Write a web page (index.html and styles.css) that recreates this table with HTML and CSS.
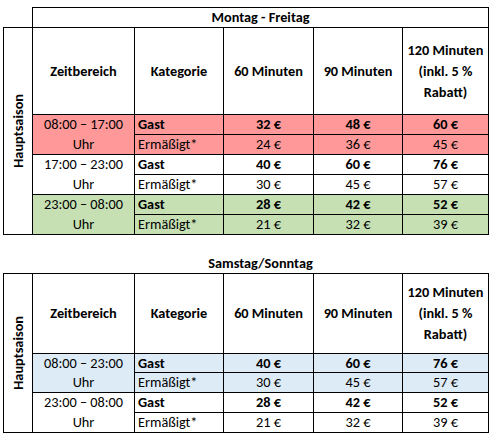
FILE: index.html
```html
<!DOCTYPE html>
<html lang="de">
<head>
<meta charset="utf-8">
<title>Preise</title>
<link rel="stylesheet" href="styles.css">
</head>
<body>
<div class="sheet">
  <div class="block">
    <div class="caption boxed">Montag - Freitag</div>
    <div class="grid grid1" role="table">
      <div class="cell season"><span>Hauptsaison</span></div>
      <div class="cell head">Zeitbereich</div>
      <div class="cell head">Kategorie</div>
      <div class="cell head">60 Minuten</div>
      <div class="cell head">90 Minuten</div>
      <div class="cell head">120 Minuten (inkl. 5 % Rabatt)</div>

      <div class="cell time red">08:00 – 17:00<br>Uhr</div>
      <div class="cell cat b red">Gast</div>
      <div class="cell b red">32 €</div>
      <div class="cell b red">48 €</div>
      <div class="cell b red">60 €</div>
      <div class="cell cat red">Ermäßigt*</div>
      <div class="cell red">24 €</div>
      <div class="cell red">36 €</div>
      <div class="cell red">45 €</div>

      <div class="cell time">17:00 – 23:00<br>Uhr</div>
      <div class="cell cat b">Gast</div>
      <div class="cell b">40 €</div>
      <div class="cell b">60 €</div>
      <div class="cell b">76 €</div>
      <div class="cell cat">Ermäßigt*</div>
      <div class="cell">30 €</div>
      <div class="cell">45 €</div>
      <div class="cell">57 €</div>

      <div class="cell time green">23:00 – 08:00<br>Uhr</div>
      <div class="cell cat b green">Gast</div>
      <div class="cell b green">28 €</div>
      <div class="cell b green">42 €</div>
      <div class="cell b green">52 €</div>
      <div class="cell cat green">Ermäßigt*</div>
      <div class="cell green">21 €</div>
      <div class="cell green">32 €</div>
      <div class="cell green">39 €</div>
    </div>
  </div>

  <div class="block">
    <div class="caption">Samstag/Sonntag</div>
    <div class="grid grid2" role="table">
      <div class="cell season season2"><span>Hauptsaison</span></div>
      <div class="cell head">Zeitbereich</div>
      <div class="cell head">Kategorie</div>
      <div class="cell head">60 Minuten</div>
      <div class="cell head">90 Minuten</div>
      <div class="cell head">120 Minuten (inkl. 5 % Rabatt)</div>

      <div class="cell time blue">08:00 – 23:00<br>Uhr</div>
      <div class="cell cat b blue">Gast</div>
      <div class="cell b blue">40 €</div>
      <div class="cell b blue">60 €</div>
      <div class="cell b blue">76 €</div>
      <div class="cell cat blue">Ermäßigt*</div>
      <div class="cell blue">30 €</div>
      <div class="cell blue">45 €</div>
      <div class="cell blue">57 €</div>

      <div class="cell time">23:00 – 08:00<br>Uhr</div>
      <div class="cell cat b">Gast</div>
      <div class="cell b">28 €</div>
      <div class="cell b">42 €</div>
      <div class="cell b">52 €</div>
      <div class="cell cat">Ermäßigt*</div>
      <div class="cell">21 €</div>
      <div class="cell">32 €</div>
      <div class="cell">39 €</div>
    </div>
  </div>
</div>
</body>
</html>
```

FILE: styles.css
```css
body {
  margin: 0;
  background: #ffffff;
  color: #000000;
  font-family: Carlito, Lato, "Liberation Sans", sans-serif;
  font-size: 14.3px;
}

.sheet {
  display: flex;
  flex-direction: column;
  align-items: flex-start;
  gap: 18px;
  padding: 7px 0 0 3px;
}

.block {
  display: flex;
  flex-direction: column;
}

.caption {
  box-sizing: border-box;
  width: 457px;
  height: 20px;
  margin-left: 29px;
  font-weight: bold;
  text-align: center;
  line-height: 20px;
}

.caption.boxed {
  border: 1px solid #000000;
  border-bottom: none;
  line-height: 19px;
}

.grid {
  display: grid;
  grid-template-columns: 28px 101px 88px 89px 88px 85px;
  gap: 1px;
  padding: 1px;
  background: #000000;
  width: max-content;
}

.grid1 {
  grid-template-rows: 86px repeat(6, 19px);
}

.grid2 {
  grid-template-rows: 79px 18px 19px 19px 19px;
}

.cell {
  background: #ffffff;
  display: flex;
  align-items: center;
  justify-content: center;
  text-align: center;
  line-height: 19px;
  padding: 0 3px;
  white-space: nowrap;
}

.head {
  font-weight: bold;
  line-height: 21px;
  white-space: normal;
}

.season {
  grid-column: 1;
  grid-row: 1 / span 7;
  padding: 0;
}

.season2 {
  grid-row: 1 / span 5;
}

.season span {
  writing-mode: vertical-rl;
  transform: rotate(180deg);
  font-weight: bold;
}

.time {
  grid-column: 2;
  grid-row: span 2;
  line-height: 19.5px;
}

.cat {
  justify-content: flex-start;
}

.b { font-weight: bold; }

.red { background: #ff9999; }
.green { background: #c6e0b4; }
.blue { background: #ddebf7; }
```
